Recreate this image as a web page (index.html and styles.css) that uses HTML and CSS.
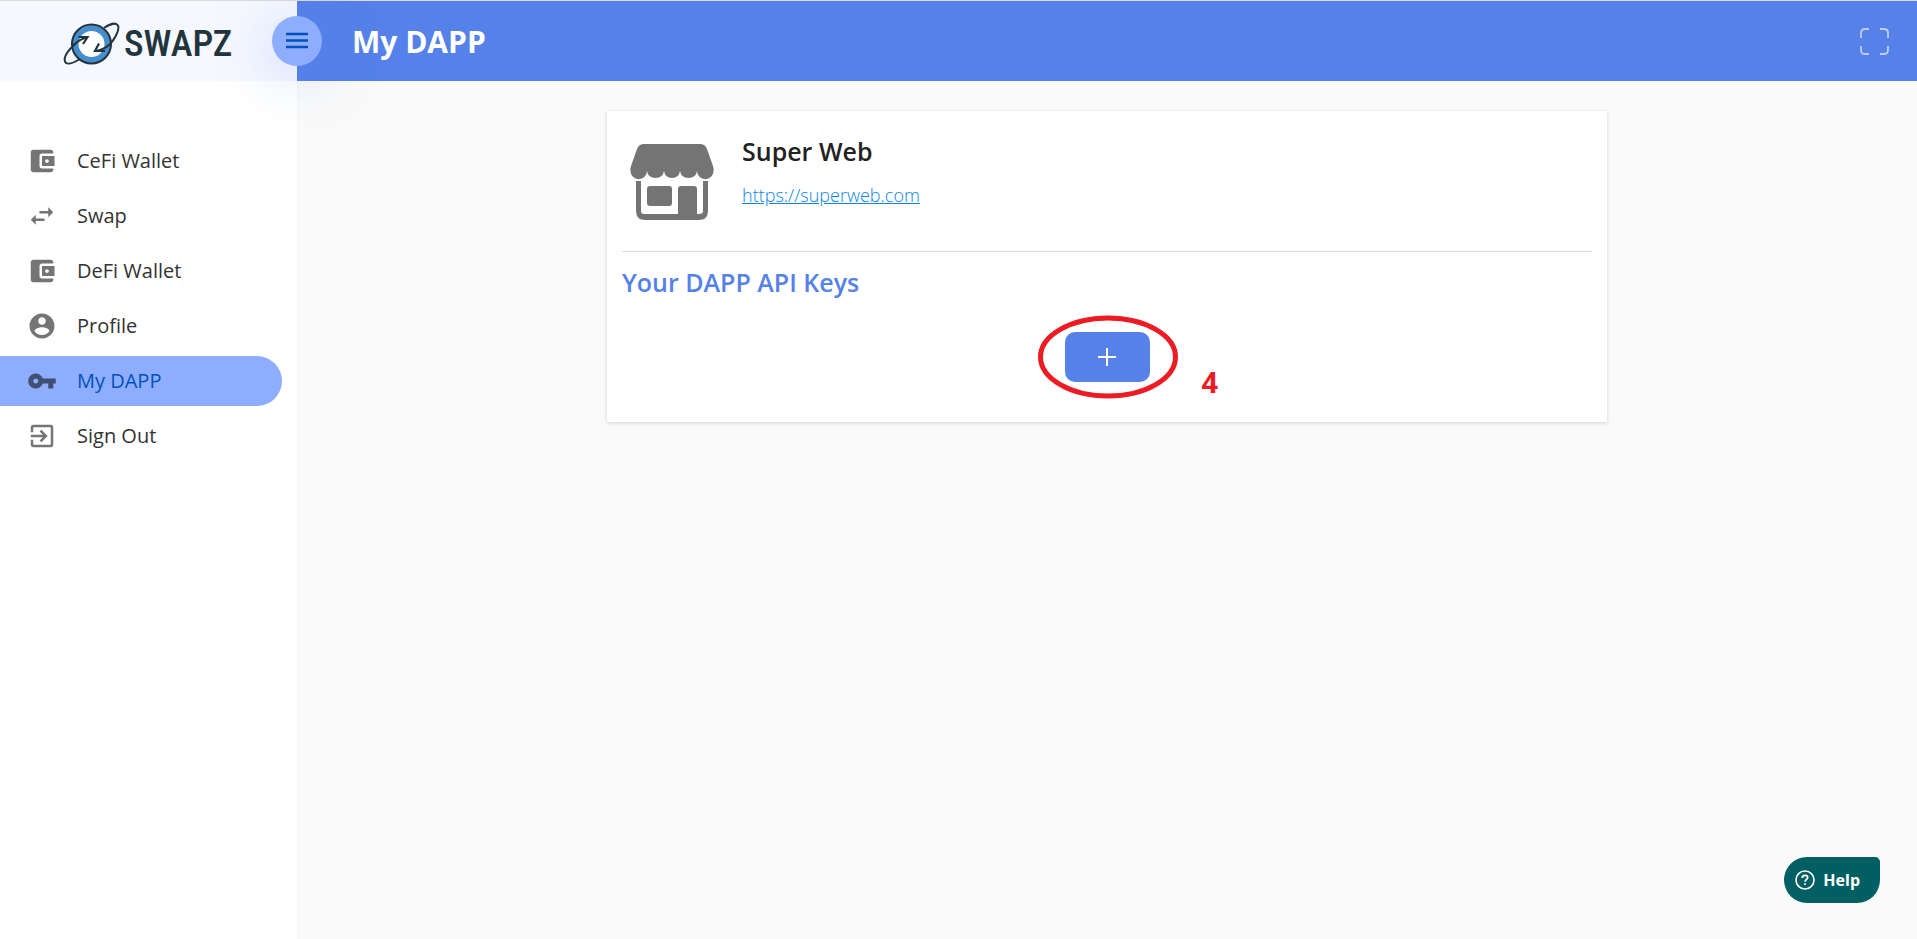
FILE: index.html
```html
<!DOCTYPE html>
<html lang="en">
<head>
<meta charset="utf-8">
<title>My DAPP</title>
<link rel="stylesheet" href="styles.css">
</head>
<body>
<div class="app">
  <aside class="sidebar">
    <div class="brand">
      <a class="logo" href="#">
        <svg class="logo-mark" viewBox="0 0 58 44" aria-hidden="true">
          <circle cx="28.500" cy="22" r="16" fill="#fff" stroke="#478ecf" stroke-width="6"/>
          <circle cx="28.500" cy="22" r="19.500" fill="none" stroke="#22343c" stroke-width="2"/>
          <g fill="none" stroke="#22343c" stroke-width="2">
            <path d="M9 25C2 32 0 38 3 41C6 43 12 40 17 37"/>
            <path d="M9 25C14 20 17 17 24 15.500"/>
            <path d="M41 6C48 1 53 1 55 3.500C57 8 51 18 47 22"/>
            <path d="M47 22C43 26 39 28 33 29"/>
          </g>
          <path d="M15.500 15H24.500L20 22" fill="none" stroke="#22343c" stroke-width="2.200"/>
          <path d="M36 21.500L32 29H42" fill="none" stroke="#22343c" stroke-width="2.200"/>
        </svg>
        <span class="logo-text">SWAPZ</span>
      </a>
      <button class="menu-toggle" type="button" aria-label="Toggle menu">
        <svg width="24" height="18" viewBox="0 0 24 18" aria-hidden="true"><path d="M1 2H23M1 8.500H23M1 15H23" stroke="#0052b8" stroke-width="2.500"/></svg>
      </button>
    </div>
    <nav class="nav">
      <a class="nav-item" href="#"><svg viewBox="0 0 24 24" aria-hidden="true"><path d="M21 18v1c0 1.100-.9 2-2 2H5c-1.110 0-2-.9-2-2V5c0-1.100.89-2 2-2h14c1.100 0 2 .9 2 2v1h-9c-1.110 0-2 .9-2 2v8c0 1.100.89 2 2 2h9zm-9-2h10V8H12v8zm4-2.500c-.83 0-1.500-.67-1.500-1.500s.67-1.500 1.500-1.500 1.500.67 1.500 1.500-.67 1.500-1.500 1.500z"/></svg>CeFi Wallet</a>
      <a class="nav-item" href="#"><svg viewBox="0 0 24 24" aria-hidden="true"><path d="M6.990 11L3 15l3.990 4v-3H14v-2H6.990v-3zM21 9l-3.990-4v3H10v2h7.010v3L21 9z"/></svg>Swap</a>
      <a class="nav-item" href="#"><svg viewBox="0 0 24 24" aria-hidden="true"><path d="M21 18v1c0 1.100-.9 2-2 2H5c-1.110 0-2-.9-2-2V5c0-1.100.89-2 2-2h14c1.100 0 2 .9 2 2v1h-9c-1.110 0-2 .9-2 2v8c0 1.100.89 2 2 2h9zm-9-2h10V8H12v8zm4-2.500c-.83 0-1.500-.67-1.500-1.500s.67-1.500 1.500-1.500 1.500.67 1.500 1.500-.67 1.500-1.500 1.500z"/></svg>DeFi Wallet</a>
      <a class="nav-item" href="#"><svg viewBox="0 0 24 24" aria-hidden="true"><path d="M12 2C6.480 2 2 6.480 2 12s4.480 10 10 10 10-4.480 10-10S17.520 2 12 2zm0 3c1.660 0 3 1.340 3 3s-1.340 3-3 3-3-1.340-3-3 1.340-3 3-3zm0 14.200c-2.500 0-4.710-1.280-6-3.220.03-1.990 4-3.080 6-3.080 1.990 0 5.970 1.090 6 3.080-1.290 1.940-3.500 3.220-6 3.220z"/></svg>Profile</a>
      <a class="nav-item active" href="#" aria-current="page"><svg viewBox="0 0 24 24" aria-hidden="true"><path d="M12.650 10C11.830 7.670 9.610 6 7 6c-3.310 0-6 2.690-6 6s2.690 6 6 6c2.610 0 4.830-1.670 5.650-4H17v4h4v-4h2v-4H12.650zM7 14c-1.100 0-2-.9-2-2s.9-2 2-2 2 .9 2 2-.9 2-2 2z"/></svg>My DAPP</a>
      <a class="nav-item" href="#"><svg viewBox="0 0 24 24" aria-hidden="true"><path d="M10.090 15.590L11.500 17l5-5-5-5-1.410 1.410L12.670 11H3v2h9.670l-2.580 2.590zM19 3H5c-1.110 0-2 .9-2 2v4h2V5h14v14H5v-4H3v4c0 1.100.89 2 2 2h14c1.100 0 2-.9 2-2V5c0-1.100-.9-2-2-2z"/></svg>Sign Out</a>
    </nav>
  </aside>
  <div class="page">
    <header class="topbar">
      <h1 class="page-title">My DAPP</h1>
      <button class="fullscreen" type="button" aria-label="Full screen">
        <svg width="29" height="27" viewBox="0 0 29 27" aria-hidden="true"><path d="M1 10V5Q1 1 5 1H9M20 1H24Q28 1 28 5V10M28 18V22Q28 26 24 26H20M9 26H5Q1 26 1 22V18" fill="none" stroke="#bdcdf6" stroke-width="1.800"/></svg>
      </button>
    </header>
    <main class="content">
      <section class="card">
        <div class="dapp">
          <svg class="store" viewBox="0 0 84 76" aria-hidden="true">
            <path fill="#747474" d="M14 0H70Q75 0 77 5L83 22Q84 25 83.500 27A8 8 0 0 1 67 27Q66 34 58.500 34Q51 34 50 27Q49 34 42 34Q35 34 34 27Q33 34 25.500 34Q18 34 17 27A8 8 0 0 1 .5 27Q0 25 1 22L7 5Q9 0 14 0Z"/>
            <path fill="#747474" fill-rule="evenodd" d="M6 37H11V67Q11 70 14 70H48V45Q48 42 51 42H64Q67 42 67 45V70H69Q73 70 73 67V37H78V67Q78 76 69 76H15Q6 76 6 67Z"/>
            <rect x="17" y="42" width="25" height="20" rx="3" fill="#747474"/>
          </svg>
          <div class="dapp-info">
            <h2 class="dapp-name">Super Web</h2>
            <a class="dapp-link" href="https://superweb.com">https://superweb.com</a>
          </div>
        </div>
        <h2 class="keys-title">Your DAPP API Keys</h2>
        <div class="actions">
          <div class="marked">
            <button class="add" type="button" aria-label="Add API key">
              <svg width="18" height="18" viewBox="0 0 18 18" aria-hidden="true"><path d="M9 0V18M0 9H18" stroke="#fff" stroke-width="2"/></svg>
            </button>
            <svg class="ring" viewBox="0 0 142 84" aria-hidden="true"><ellipse cx="71" cy="42" rx="67.500" ry="39" fill="none" stroke="#ed1c24" stroke-width="5"/></svg>
            <span class="step">4</span>
          </div>
        </div>
      </section>
    </main>
  </div>
  <button class="help" type="button">
    <svg width="20" height="20" viewBox="0 0 20 20" aria-hidden="true" fill="none" stroke="#fff"><circle cx="10" cy="10" r="9" stroke-width="1.600"/><path d="M7.300 8Q7.300 5.300 10 5.300Q12.700 5.300 12.700 7.600C12.700 9.500 10 9.500 10 11.800M10 13.200V15" stroke-width="1.700"/></svg>
    Help
  </button>
</div>
</body>
</html>
```
FILE: styles.css
```css
* { box-sizing: border-box; }

body {
  margin: 0;
  font-family: "Open Sans", "Noto Sans", sans-serif;
  background: #fafafa;
  color: #212121;
}

h1, h2 { margin: 0; }

button {
  border: 0;
  padding: 0;
  font-family: inherit;
  cursor: pointer;
}

svg { display: block; flex: none; }

.app {
  display: flex;
  min-height: 100vh;
  border-top: 1px solid #d9dadc;
}

.sidebar {
  position: relative;
  z-index: 1;
  flex: none;
  width: 297px;
  background: #fff;
  box-shadow: 0 80px 3px rgba(0, 0, 0, 0.04);
}

.brand {
  position: relative;
  display: flex;
  align-items: center;
  height: 80px;
  padding: 6px 0 0 63px;
  background: #f6f8ff;
}

.logo {
  display: flex;
  align-items: center;
  gap: 3px;
  color: #22343c;
  text-decoration: none;
}

.logo-mark { width: 58px; height: 44px; }

.logo-text {
  font-family: "Roboto Condensed", Roboto, sans-serif;
  font-size: 37px;
  font-weight: 500;
  line-height: 44px;
}

.menu-toggle {
  position: absolute;
  top: 15px;
  right: -25px;
  display: flex;
  align-items: center;
  justify-content: center;
  width: 50px;
  height: 50px;
  border-radius: 50%;
  background: #8eadff;
  box-shadow: 0 8px 60px rgba(85, 129, 233, 0.35);
}

.nav {
  display: flex;
  flex-direction: column;
  gap: 5px;
  padding: 55px 15px 0 0;
}

.nav-item {
  display: flex;
  align-items: center;
  gap: 20px;
  height: 50px;
  padding: 0 0 1px 27px;
  border-radius: 0 25px 25px 0;
  color: #333;
  font-size: 20px;
  font-weight: 400;
  text-decoration: none;
}

.nav-item svg { width: 30px; height: 30px; fill: #757575; }

.nav-item.active { background: #8eadff; color: #0052b8; }
.nav-item.active svg { fill: #414f75; }

.page { flex: 1; min-width: 0; }

.topbar {
  display: flex;
  align-items: center;
  justify-content: space-between;
  height: 80px;
  padding: 0 28px 0 55px;
  background: #5581e9;
}

.page-title {
  color: #fff;
  font-size: 30px;
  font-weight: 700;
  line-height: 40px;
  padding-top: 2px;
}

.fullscreen { background: none; }

.content { padding: 30px; }

.card {
  max-width: 1000px;
  margin: 0 auto;
  padding: 15px 15px 40px;
  background: #fff;
  box-shadow: 0 1px 4px rgba(0, 0, 0, 0.16);
}

.dapp {
  display: flex;
  gap: 28px;
  padding: 8px 8px 31px;
  border-bottom: 1px solid #dcdcdc;
}

.store { width: 84px; height: 76px; margin-top: 10px; }

.dapp-name {
  font-size: 25px;
  font-weight: 600;
  line-height: 34px;
}

.dapp-link {
  display: inline-block;
  margin-top: 13px;
  color: #0b84ee;
  font-size: 18px;
  font-weight: 300;
  line-height: 28px;
}

.keys-title {
  margin-top: 12px;
  color: #5581e9;
  font-size: 25px;
  font-weight: 600;
  line-height: 37px;
}

.actions {
  display: flex;
  justify-content: center;
  margin-top: 31px;
}

.marked { position: relative; }

.add {
  display: flex;
  align-items: center;
  justify-content: center;
  width: 85px;
  height: 50px;
  border-radius: 10px;
  background: #5581e9;
}

.ring {
  position: absolute;
  top: -17px;
  left: -28px;
  width: 142px;
  height: 84px;
  pointer-events: none;
}

.step {
  position: absolute;
  top: 32px;
  left: 137px;
  color: #ed1c24;
  font-size: 29px;
  font-weight: 700;
  line-height: 36px;
}

.help {
  position: fixed;
  right: 37px;
  bottom: 36px;
  display: flex;
  align-items: center;
  gap: 8px;
  height: 46px;
  padding: 0 20px 1px 11px;
  border-radius: 23px 5px 23px 23px;
  background: #005f63;
  color: #fff;
  font-size: 16px;
  font-weight: 700;
}
```
